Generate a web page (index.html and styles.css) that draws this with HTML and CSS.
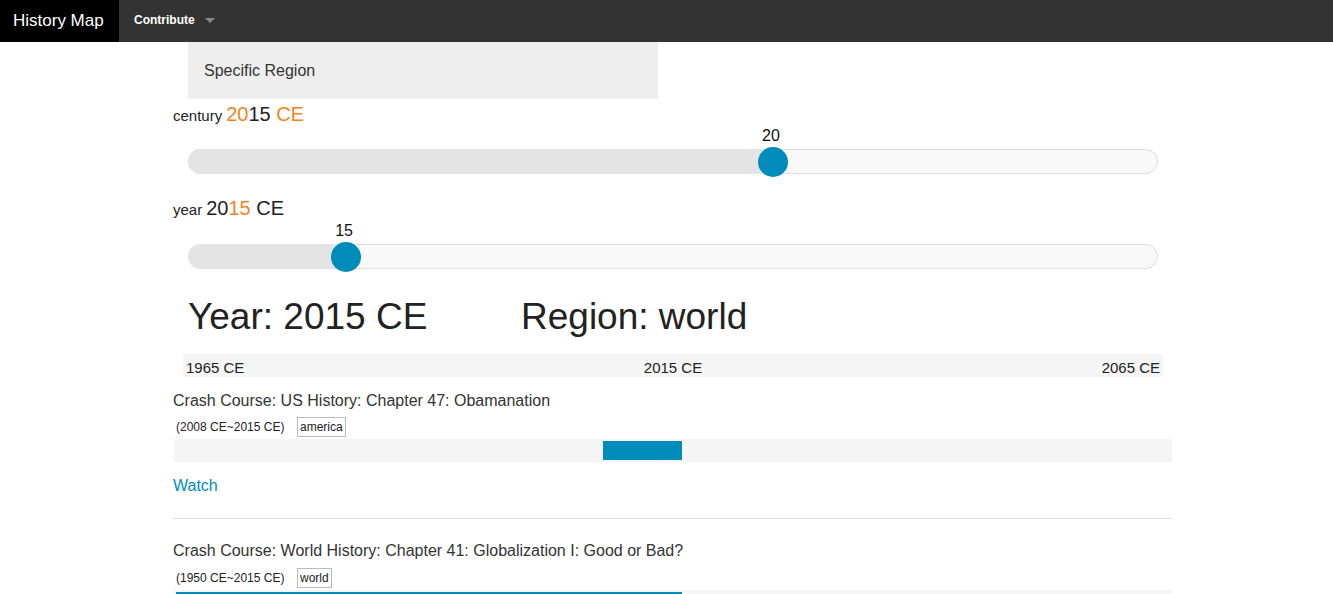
FILE: index.html
```html
<!DOCTYPE html>
<html>
<head>
<meta charset="utf-8">
<link rel="stylesheet" href="styles.css">
</head>
<body>
<header class="topbar">
  <div class="brand">History Map</div>
  <div class="menu-item">Contribute <span class="caret"></span></div>
</header>
<main class="page">
  <div class="region-panel">Specific Region</div>

  <div class="slider-label">century <span class="big"><span class="hl">20</span>15 <span class="hl">CE</span></span></div>
  <div class="slider">
    <div class="track">
      <div class="fill" style="width:60.2%"></div>
      <div class="handle" style="left:60.3%"><span class="val">20</span></div>
    </div>
  </div>

  <div class="slider-label">year <span class="big">20<span class="hl">15</span> CE</span></div>
  <div class="slider second">
    <div class="track">
      <div class="fill" style="width:16.1%"></div>
      <div class="handle" style="left:16.2%"><span class="val">15</span></div>
    </div>
  </div>

  <div class="summary">
    <h1 class="year">Year: 2015 CE</h1>
    <h1 class="region">Region: world</h1>
  </div>

  <div class="axis">
    <span>1965 CE</span>
    <span>2015 CE</span>
    <span>2065 CE</span>
  </div>

  <section class="item">
    <div class="title">Crash Course: US History: Chapter 47: Obamanation</div>
    <div class="meta"><span class="range">(2008 CE~2015 CE)</span><span class="tag">america</span></div>
    <div class="bar"><div class="span" style="left:43%;width:7.9%"></div></div>
    <a class="watch" href="#">Watch</a>
  </section>
  <hr class="divider">
  <section class="item">
    <div class="title">Crash Course: World History: Chapter 41: Globalization I: Good or Bad?</div>
    <div class="meta"><span class="range">(1950 CE~2015 CE)</span><span class="tag">world</span></div>
    <div class="bar"><div class="span" style="left:0.2%;width:50.7%"></div></div>
  </section>
</main>
</body>
</html>
```

FILE: styles.css
```css
* { box-sizing: border-box; }
html, body { margin: 0; padding: 0; }
body {
  font-family: "Liberation Sans", Arial, sans-serif;
  color: #222;
  background: #fff;
  overflow: hidden;
}
.topbar {
  height: 42px;
  background: #333;
  display: flex;
  align-items: stretch;
}
.brand {
  width: 119px;
  background: #000;
  color: #fff;
  font-size: 17px;
  display: flex;
  align-items: center;
  padding-left: 13px;
}
.menu-item {
  color: #fff;
  font-size: 12px;
  font-weight: bold;
  display: flex;
  align-items: center;
  padding-left: 15px;
  padding-bottom: 2px;
}
.caret {
  display: inline-block;
  width: 0;
  height: 0;
  margin-left: 10px;
  border-left: 5px solid transparent;
  border-right: 5px solid transparent;
  border-top: 5px solid #888;
}
.page {
  margin-left: 173px;
  width: 999px;
}
.region-panel {
  margin-left: 15px;
  width: 470px;
  height: 57px;
  background: #eee;
  color: #333;
  font-size: 16px;
  display: flex;
  align-items: center;
  padding-left: 16px;
  padding-top: 1px;
}
.slider-label {
  height: 32px;
  display: flex;
  align-items: center;
  font-size: 15px;
  color: #222;
}
.slider-label .big {
  font-size: 20px;
  margin-left: 4px;
  margin-top: -2px;
}
.hl { color: #f7821b; }
.slider {
  margin: 18px 0 19px 15px;
  width: 970px;
}
.slider.second { margin-top: 19px; margin-bottom: 0; }
.track {
  position: relative;
  height: 25px;
  border: 1px solid #ddd;
  border-radius: 13px;
  background: #f9f9f9;
}
.fill {
  position: absolute;
  left: -1px;
  top: -1px;
  bottom: -1px;
  background: #e4e4e4;
  border-radius: 13px 0 0 13px;
}
.handle {
  position: absolute;
  top: 50%;
  width: 30px;
  height: 30px;
  margin-left: -15px;
  margin-top: -15px;
  border-radius: 50%;
  background: #008cba;
}
.val {
  position: absolute;
  left: 50%;
  bottom: 100%;
  transform: translateX(-60%);
  margin-bottom: 2px;
  font-size: 16px;
  color: #111;
  line-height: 18px;
}
.summary {
  display: flex;
  margin-top: 26px;
  margin-left: 15px;
  height: 44px;
  align-items: center;
}
.summary h1 {
  margin: 0;
  font-weight: normal;
  font-size: 37px;
  line-height: 44px;
  color: #222;
}
.summary .year { width: 333px; }
.axis {
  margin-top: 15px;
  margin-left: 10px;
  width: 980px;
  height: 23px;
  background: #f5f5f5;
  display: flex;
  justify-content: space-between;
  align-items: center;
  font-size: 15px;
  padding: 3px 3px 0 3px;
  color: #222;
}
.item .title {
  margin-top: 13px;
  font-size: 16px;
  line-height: 22px;
  color: #333;
}
.meta {
  margin-top: 5px;
  height: 20px;
  display: flex;
  align-items: center;
  font-size: 12px;
  color: #222;
}
.range { margin-left: 3px; width: 121px; }
.tag {
  border: 1px solid #bbb;
  height: 20px;
  padding: 0 2px;
  display: flex;
  align-items: center;
}
.bar {
  position: relative;
  margin-top: 2px;
  margin-left: 1px;
  width: 998px;
  height: 23px;
  background: #f5f5f5;
}
.span {
  position: absolute;
  top: 2px;
  height: 19px;
  background: #008cba;
}
.watch {
  display: block;
  margin-top: 13px;
  font-size: 16px;
  line-height: 22px;
  color: #008cba;
  text-decoration: none;
}
.divider {
  margin: 21px 0 0 0;
  border: 0;
  border-top: 1px solid #ddd;
  height: 0;
}
.item + .divider + .item .title { margin-top: 21px; }
.item + .divider + .item .meta { margin-top: 6px; }
```
